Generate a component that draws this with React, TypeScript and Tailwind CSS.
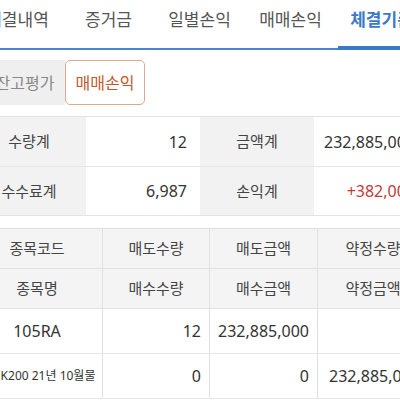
const TABS = ["체결내역", "증거금", "일별손익", "매매손익", "체결기준"];
const ACTIVE_TAB = 4;

const SUMMARY = [
  [
    { label: "수량계", value: "12" },
    { label: "금액계", value: "232,885,000" },
  ],
  [
    { label: "수수료계", value: "6,987" },
    { label: "손익계", value: "+382,000", red: true },
  ],
];

const HEAD = [
  ["종목코드", "매도수량", "매도금액", "약정수량"],
  ["종목명", "매수수량", "매수금액", "약정금액"],
];

const COLS = ["w-[131px]", "w-[107px]", "w-[108px]", "w-[110px]"];

export default function App() {
  return (
    <div
      className="w-[400px] h-[400px] overflow-hidden bg-white text-[#333]"
      style={{ fontFamily: '"Noto Sans", "Noto Sans CJK KR", sans-serif' }}
    >
      <div className="-ml-[28px] w-[456px]">
        {/* 상단 탭 */}
        <div className="flex border-b-2 border-[#4a86d0]">
          {TABS.map((t, i) => (
            <div
              key={t}
              className={`relative w-[91px] shrink-0 h-[48px] flex items-center justify-center pb-[8px] text-[17px] ${
                i === ACTIVE_TAB ? "text-[#3b7ac6] font-bold" : "text-[#555]"
              }`}
            >
              {t}
              {i === ACTIVE_TAB && (
                <span className="absolute left-[2px] right-0 -bottom-[2px] h-[4px] bg-[#3b7ac6]" />
              )}
            </div>
          ))}
        </div>

        {/* 잔고평가 / 매매손익 */}
        <div className="mt-[10px] ml-[13px] flex h-[45px] text-[16px]">
          <div className="w-[80px] bg-[#efefef] text-[#888] flex items-center justify-center">잔고평가</div>
          <div className="w-[80px] bg-white border border-[#d9aa90] rounded-[5px] text-[#c4572c] flex items-center justify-center">
            매매손익
          </div>
        </div>

        {/* 합계 */}
        <div className="mt-[11px] border-t border-b border-[#e3e3e3]">
          {SUMMARY.map((row, r) => (
            <div key={r} className={`flex h-[49px] text-[15px] ${r > 0 ? "border-t border-[#e6e6e6]" : ""}`}>
              {row.map((c) => (
                <div key={c.label} className="flex">
                  <div className="w-[114px] bg-[#f2f2f2] text-[#444] flex items-center justify-center">{c.label}</div>
                  <div
                    className={`w-[114px] flex items-center justify-end pr-[13px] text-[16px] ${
                      c.red ? "text-[#c8383a]" : "text-[#333]"
                    }`}
                  >
                    {c.value}
                  </div>
                </div>
              ))}
            </div>
          ))}
        </div>

        {/* 종목 리스트 */}
        <div className="mt-[12px] border-t border-[#dedede]">
          {HEAD.map((row, r) => (
            <div key={r} className="flex h-[40px] bg-[#f4f4f4] border-b border-[#e2e2e2] text-[15px] text-[#444]">
              {row.map((h, i) => (
                <div key={h} className={`${COLS[i]} flex items-center justify-center ${i < 3 ? "border-r border-[#e0e0e0]" : ""}`}>
                  {h}
                </div>
              ))}
            </div>
          ))}
          <div className="flex h-[45px] border-b border-[#e6e6e6] text-[16px]">
            <div className={`${COLS[0]} flex items-center justify-center border-r border-[#e0e0e0]`}>105RA</div>
            <div className={`${COLS[1]} flex items-center justify-end pr-[8px] border-r border-[#e0e0e0]`}>12</div>
            <div className={`${COLS[2]} flex items-center justify-end pr-[8px] border-r border-[#e0e0e0]`}>232,885,000</div>
            <div className={`${COLS[3]} flex items-center justify-end pr-[8px]`}></div>
          </div>
          <div className="flex h-[45px] border-b border-[#e6e6e6] text-[16px]">
            <div className={`${COLS[0]} flex items-center justify-center border-r border-[#e0e0e0] text-[12px]`}>
              미니K200 21년 10월물
            </div>
            <div className={`${COLS[1]} flex items-center justify-end pr-[8px] border-r border-[#e0e0e0]`}>0</div>
            <div className={`${COLS[2]} flex items-center justify-end pr-[8px] border-r border-[#e0e0e0]`}>0</div>
            <div className={`${COLS[3]} flex items-center justify-end pr-[8px]`}>232,885,000</div>
          </div>
        </div>
      </div>
    </div>
  );
}
